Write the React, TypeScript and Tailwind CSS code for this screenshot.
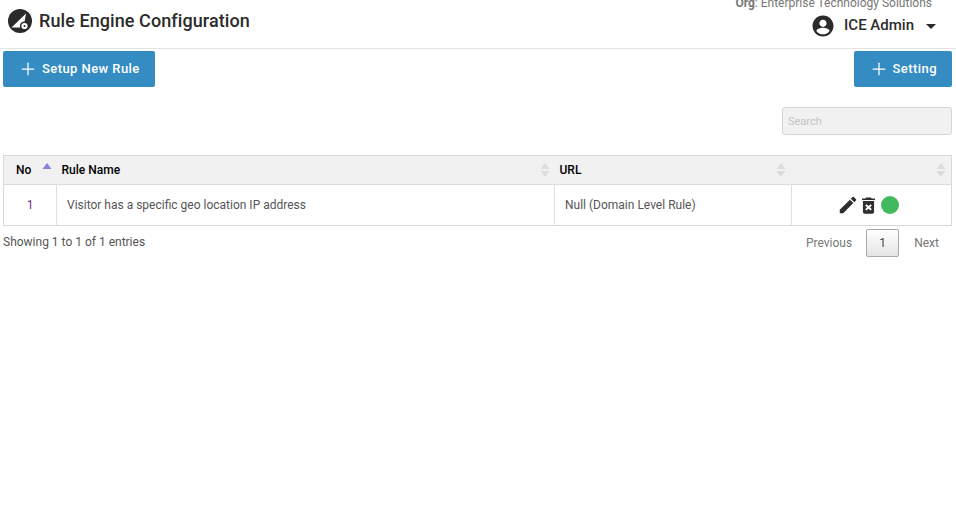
import { Plus } from "lucide-react";

const SortIcon = ({ active = false }: { active?: boolean }) => (
  <svg width="10" height="16" viewBox="0 0 10 16" className="shrink-0">
    <path d="M5 1 L9.5 7 H0.5 Z" fill={active ? "#8b7fd6" : "#dcdcdc"} />
    {!active && <path d="M5 15 L9.5 9 H0.5 Z" fill="#dcdcdc" />}
  </svg>
);

const Logo = () => (
  <svg width="24" height="24" viewBox="0 0 24 24" className="shrink-0">
    <circle cx="12" cy="12" r="12" fill="#2b2b2b" />
    <path d="M3.5 18.5 L18 4.5 L15.5 18.5 Z" fill="#fff" />
    <circle cx="16.5" cy="17" r="4.6" fill="#2b2b2b" />
    <circle cx="16.5" cy="17" r="3.1" fill="#fff" />
    <circle cx="16.5" cy="17" r="1" fill="#2b2b2b" />
  </svg>
);

const UserIcon = () => (
  <svg width="24" height="24" viewBox="0 0 24 24" fill="#2b2b2b" className="mt-[1px] shrink-0">
    <path d="M12 1.5C6.2 1.5 1.5 6.2 1.5 12S6.2 22.5 12 22.5 22.5 17.8 22.5 12 17.8 1.5 12 1.5zm0 4.2c2 0 3.6 1.6 3.6 3.6S14 12.9 12 12.9 8.4 11.3 8.4 9.3 10 5.7 12 5.7zm0 14.6c-2.7 0-5.1-1.3-6.6-3.4.1-2 4.4-3.1 6.6-3.1s6.5 1.1 6.6 3.1c-1.5 2.1-3.9 3.4-6.6 3.4z" />
  </svg>
);

const PencilIcon = () => (
  <svg width="22" height="22" viewBox="0 0 24 24" fill="#2f2f2f" className="shrink-0">
    <path d="M3 17.25V21h3.75L17.81 9.94l-3.75-3.75L3 17.25zM20.71 7.04a1 1 0 0 0 0-1.41l-2.34-2.34a1 1 0 0 0-1.41 0l-1.83 1.83 3.75 3.75 1.83-1.83z" />
  </svg>
);

const TrashIcon = () => (
  <svg width="13" height="17" viewBox="0 0 14 18" fill="#2f2f2f" className="shrink-0">
    <path d="M4.5 0.5 H9.5 L10.5 1.5 H14 V3.2 H0 V1.5 H3.5 Z" />
    <path d="M1 4.2 H13 V16 a1.8 1.8 0 0 1-1.8 1.8 H2.8 A1.8 1.8 0 0 1 1 16 Z M4.8 7.6 L3.4 9 L5.4 11 L3.4 13 L4.8 14.4 L7 12.4 L9.2 14.4 L10.6 13 L8.6 11 L10.6 9 L9.2 7.6 L7 9.6 Z" fillRule="evenodd" />
  </svg>
);

const ActionButton = ({ label }: { label: string }) => (
  <button className="flex h-9 items-center gap-1 rounded-[2px] bg-[#348cc2] px-[15px] text-[13px] font-medium tracking-[0.43px] text-white">
    <Plus size={20} strokeWidth={1.5} />
    {label}
  </button>
);

export default function App() {
  return (
    <div className="min-h-[516px] bg-white font-['Roboto',sans-serif] text-[12px] text-[#555]">
      <header className="flex h-[49px] items-start justify-between overflow-hidden border-b border-[#e3e3e3]">
        <div className="flex items-center gap-[7px] pl-2 pt-[9px]">
          <Logo />
          <h1 className="text-[18px] leading-[24px] font-medium tracking-[0.08px] text-[#2b2b2b]">Rule Engine Configuration</h1>
        </div>
        <div className="flex flex-col items-end pr-6">
          <div className="-mt-[4px] text-[12px] leading-[14px] text-[#777]">
            <span className="font-bold">Org</span>: Enterprise Technology Solutions
          </div>
          <div className="mt-[3px] -mr-1 flex items-start">
            <UserIcon />
            <span className="ml-[9px] text-[15px] leading-[24px] font-medium text-[#2b2b2b]">ICE Admin</span>
            <span className="mt-[11px] ml-[12px] h-0 w-0 border-x-[5.5px] border-t-[5px] border-x-transparent border-t-[#2b2b2b]" />
          </div>
        </div>
      </header>

      <div className="mt-[2px] flex justify-between pr-1 pl-[3px]">
        <ActionButton label="Setup New Rule" />
        <ActionButton label="Setting" />
      </div>

      <div className="mt-5 flex justify-end pr-1">
        <input
          placeholder="Search"
          className="h-7 w-[170px] rounded-[3px] border border-[#d5d5d5] bg-[#f1f1f1] px-[5px] text-[11px] placeholder:text-[#c4c4c4]"
        />
      </div>

      <div className="mt-5 pr-1 pl-[3px]">
        <table className="w-full table-fixed border-collapse border border-[#d8d8d8]">
          <colgroup>
            <col className="w-[53px]" />
            <col className="w-[498px]" />
            <col className="w-[237px]" />
            <col />
          </colgroup>
          <thead className="bg-[#f1f1f1] text-[12px] font-medium text-black">
            <tr className="h-[29px] border-b border-[#dcdcdc]">
              <th className="px-1 text-left">
                <div className="flex items-start justify-between pr-[1px] pl-2">
                  <span className="leading-[16px] font-medium">No</span>
                  <SortIcon active />
                </div>
              </th>
              <th className="px-1 text-left">
                <div className="flex items-center justify-between pr-[1px] pl-[1px]">
                  <span className="font-medium">Rule Name</span>
                  <SortIcon />
                </div>
              </th>
              <th className="px-1 text-left">
                <div className="flex items-center justify-between pr-[2px] pl-[1px]">
                  <span className="font-medium">URL</span>
                  <SortIcon />
                </div>
              </th>
              <th className="px-1 text-left">
                <div className="flex items-center justify-end pr-[1px]">
                  <SortIcon />
                </div>
              </th>
            </tr>
          </thead>
          <tbody>
            <tr className="h-[41px]">
              <td className="border-r border-[#e0e0e0] text-center text-[#7a2a6e]">1</td>
              <td className="border-r border-[#e0e0e0] pl-[10px]">Visitor has a specific geo location IP address</td>
              <td className="border-r border-[#e0e0e0] pl-[10px]">Null (Domain Level Rule)</td>
              <td>
                <div className="flex items-center justify-center pr-[7px]">
                  <PencilIcon />
                  <span className="ml-[3px]">
                    <TrashIcon />
                  </span>
                  <span className="ml-[6px] h-[18px] w-[18px] rounded-full bg-[#41b95e]" />
                </div>
              </td>
            </tr>
          </tbody>
        </table>
      </div>

      <div className="mt-[3px] flex items-center justify-between pr-[5px] pl-[3px]">
        <span className="-translate-y-px">Showing 1 to 1 of 1 entries</span>
        <div className="flex items-center">
          <span className="mr-[14px] text-[#777]">Previous</span>
          <span className="flex h-7 w-[33px] items-center justify-center rounded-[2px] border border-[#a9a9a9] bg-gradient-to-b from-white to-[#e4e4e4] text-[#444]">1</span>
          <span className="mr-[12px] ml-[15px] text-[#777]">Next</span>
        </div>
      </div>
    </div>
  );
}
